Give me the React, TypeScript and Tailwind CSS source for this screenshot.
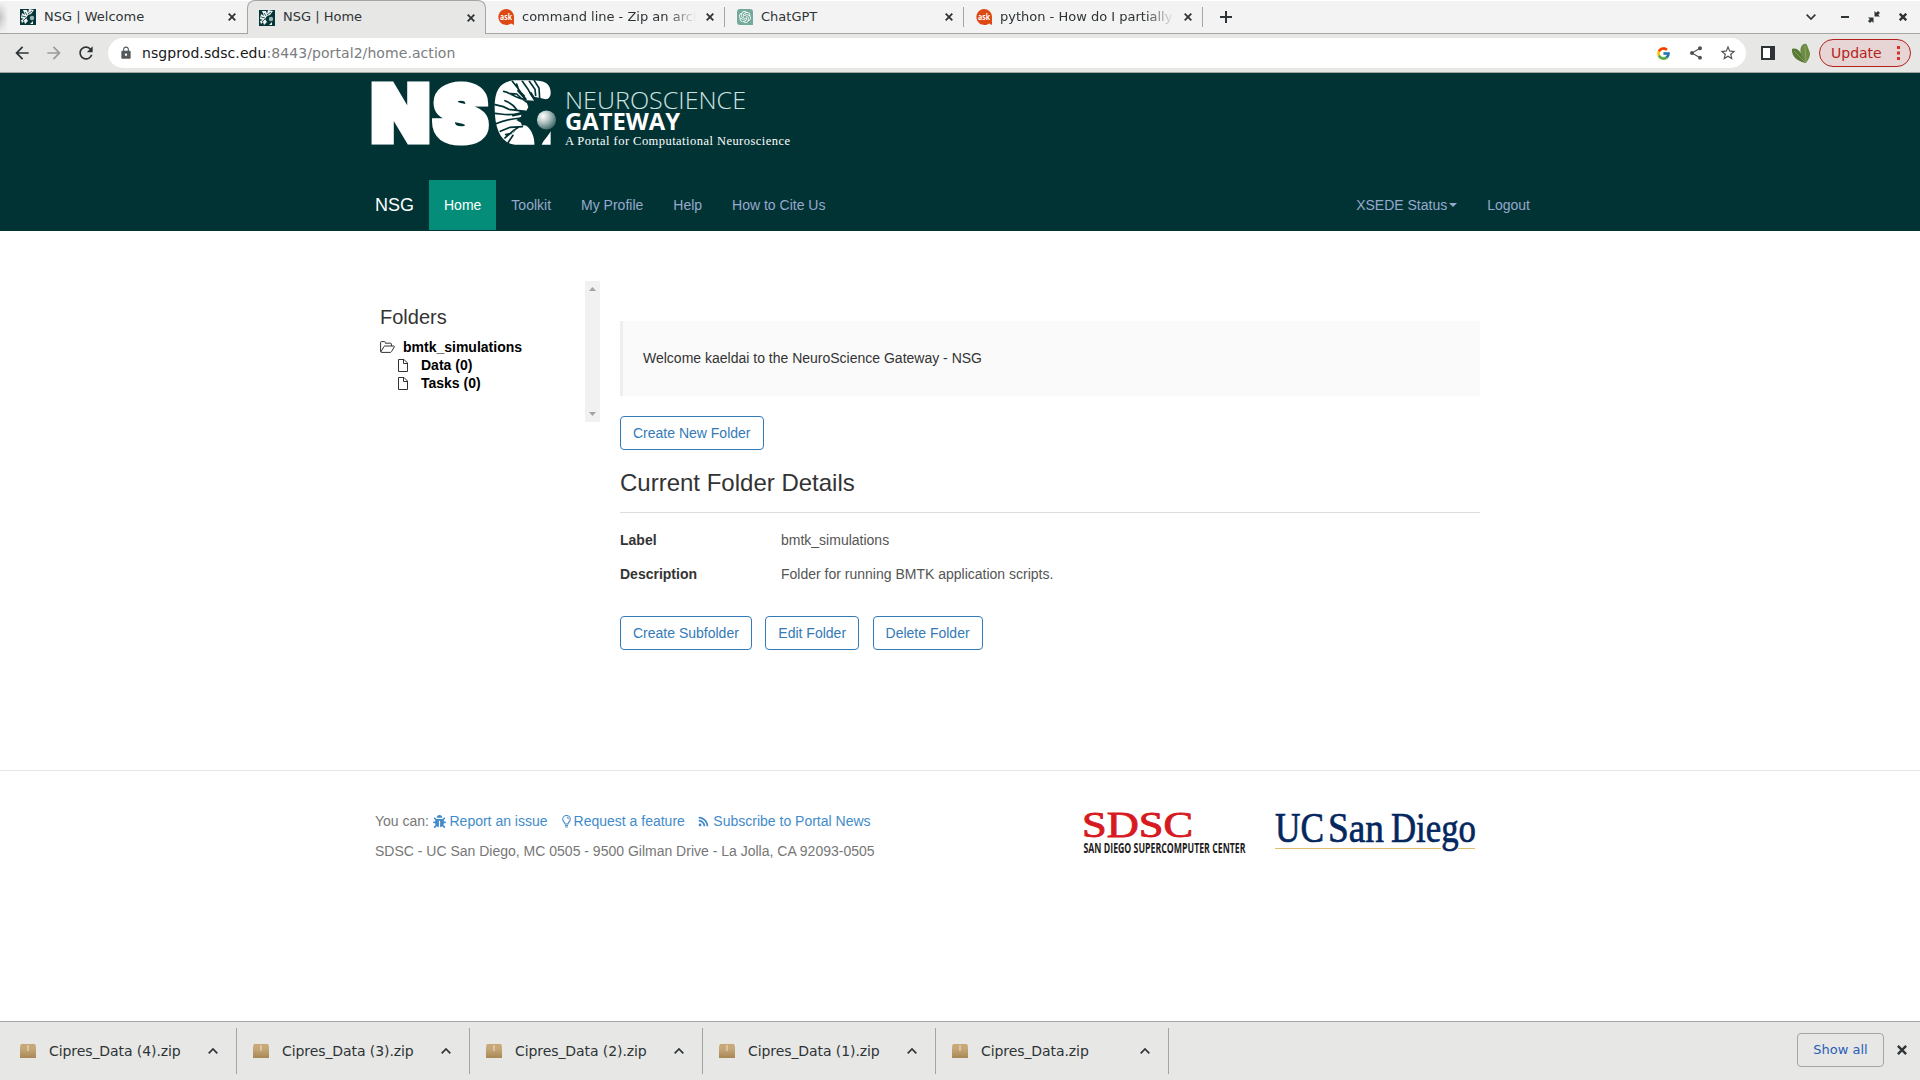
import React from 'react';
import { FaBug, FaRss } from 'react-icons/fa';
import { FcGoogle } from 'react-icons/fc';
import { MdShare, MdStarBorder, MdLock, MdArrowBack, MdArrowForward, MdRefresh } from 'react-icons/md';
import { SiOpenai } from 'react-icons/si';

const Cross = ({ size = 8, w = 1.8 }: { size?: number; w?: number }) => (
  <svg width={size} height={size} viewBox="0 0 8 8" className="shrink-0">
    <path d="M.7 .7L7.3 7.3M7.3 .7L.7 7.3" stroke="#2e3436" strokeWidth={w} fill="none" />
  </svg>
);

const NsgIcon = () => (
  <svg width="16" height="16" viewBox="0 0 16 16" className="shrink-0">
    <rect width="16" height="16" fill="#063638" />
    <path d="M1 9L2 4L5 6L3 1L7 1L8 4L9 0L14 1L11 5L8 6L6 9L8 12L5 15L4 12L2 14L1 11L4 10Z" fill="#eef4f3" />
    <path d="M12 2L8 5M5 3L7 6M2 7L6 8M3 12L6 9" stroke="#063638" strokeWidth=".8" />
    <circle cx="12" cy="9" r="2.2" fill="#9db5b5" />
    <path d="M10 15L13 12V15Z" fill="#eef4f3" />
  </svg>
);

const AskIcon = () => (
  <svg width="16" height="16" viewBox="0 0 16 16" className="shrink-0">
    <path d="M8 0a8 8 0 0 1 8 8v8l-3-1.5A8 8 0 1 1 8 0Z" fill="#dd4814" />
    <text x="8" y="10.8" fontSize="8" fontWeight="700" fontFamily="Open Sans, sans-serif" fill="#fff" textAnchor="middle" textLength="12" lengthAdjust="spacingAndGlyphs">ask</text>
  </svg>
);

const GptIcon = () => (
  <span className="flex size-4 shrink-0 items-center justify-center rounded-tl-[3px] rounded-tr-[3px] rounded-bl-[3px] bg-[#74aa9c] text-white">
    <SiOpenai size={12} />
  </span>
);

const tabs = [
  { title: 'NSG | Welcome', icon: <NsgIcon /> },
  { title: 'NSG | Home', icon: <NsgIcon />, active: true },
  { title: 'command line - Zip an arch', icon: <AskIcon />, fade: true },
  { title: 'ChatGPT', icon: <GptIcon /> },
  { title: 'python - How do I partially', icon: <AskIcon />, fade: true },
];

const TabStrip = () => (
  <div className="relative flex h-[34px] border-t border-white bg-[#f3f3f3] pl-2 shadow-[inset_0_-1px_0_#a5a5a3]">
    <span className="absolute top-0 left-0 h-[33px] w-2 bg-linear-to-r from-black/20 to-transparent [mask-image:linear-gradient(transparent,black,transparent)]" />
    {tabs.map((t, i) => (
      <div
        key={t.title}
        className={
          t.active
            ? 'relative -mt-px flex h-[34px] w-[239px] items-center rounded-t-lg border border-b-0 border-[#a5a5a3] bg-[#e7e7e5] pl-[11px]'
            : 'relative flex h-[32px] w-[239px] items-center pl-3'
        }
      >
        {t.icon}
        <span
          className={
            t.fade
              ? '-mt-px ml-2 w-[174px] overflow-hidden whitespace-nowrap [mask-image:linear-gradient(to_right,black_84%,transparent)]'
              : '-mt-px ml-2 w-[174px] overflow-hidden whitespace-nowrap'
          }
        >
          {t.title}
        </span>
        <span className="ml-[10px] flex"><Cross /></span>
        {i > 1 && <span className="absolute top-[6px] right-0 h-5 w-px bg-[#a5a5a3]" />}
      </div>
    ))}
    <svg width="12" height="12" viewBox="0 0 12 12" className="mt-[10px] ml-[17px]">
      <path d="M6 0V12M0 6H12" stroke="#2e3436" strokeWidth="2" />
    </svg>
    <div className="mr-[13px] ml-auto flex h-[31px] items-center">
      <svg width="10" height="6" viewBox="0 0 10 6"><path d="M.7 .7L5 5L9.300 .7" stroke="#2e3436" strokeWidth="1.7" fill="none" /></svg>
      <span className="ml-[25px] h-[2px] w-2 bg-[#2e3436]" />
      <svg width="12" height="12" viewBox="0 0 12 12" className="ml-[19px]">
        <path d="M6.500 0V5.500H12L10.200 3.800L12 2L10 0L8.200 1.800ZM5.500 12V6.500H0L1.800 8.200L0 10L2 12L3.800 10.200Z" fill="#2e3436" />
      </svg>
      <span className="ml-[19px] flex"><Cross w={2.4} /></span>
    </div>
  </div>
);

const Leaf = () => (
  <svg width="20" height="21" viewBox="0 0 20 21" className="ml-[16px]">
    <path d="M1 6C6 4 10 8 15 20C8 19 0 14 1 6Z" fill="#587a35" />
    <path d="M10 4C12 0 15 0 16 2L19 10C19 15 17 17 15 20C11 14 8 9 10 4Z" fill="#6d8c43" />
    <path d="M3 8L14 19M14 3L15 19" stroke="#a3b37c" strokeWidth=".6" />
  </svg>
);

const Toolbar = () => (
  <div className="flex h-[39px] items-center border-b border-[#a5a5a3] bg-[#e7e7e5] text-[#2e3436]">
    <MdArrowBack size={20} className="ml-[12px]" />
    <MdArrowForward size={20} className="ml-[12px] text-[#9a9c9c]" />
    <MdRefresh size={20} className="ml-[12px]" />
    <div className="ml-[12px] flex h-[30px] w-[1638px] items-center rounded-full bg-white">
      <MdLock size={14} className="ml-[11px] text-[#55595c]" />
      <span className="ml-[9px] w-[400px] text-[14px] tracking-[0.075px] text-[#7b7d7e]">
        <span className="text-[#17191a]">nsgprod.sdsc.edu</span>:8443/portal2/home.action
      </span>
      <FcGoogle size={15} className="ml-auto" />
      <MdShare size={16} className="ml-[17px] text-[#4f5356]" />
      <MdStarBorder size={18} className="mr-[9px] ml-[15px] text-[#4f5356]" />
    </div>
    <span className="ml-[15px] h-[14px] w-[14px] border-2 border-r-[5px] border-[#2e3436] bg-white" />
    <Leaf />
    <div className="ml-[8px] flex h-7 w-[92px] items-center rounded-full border border-[#b51f1c] bg-[#e6d5d4] pl-[11px] text-[14px] text-[#b51f1c]">
      Update
      <svg width="3" height="14" viewBox="0 0 3 14" className="ml-[15px] shrink-0"><path d="M0 0h3v3H0zM0 5.500h3v3H0zM0 11h3v3H0z" fill="#d9302c" /></svg>
    </div>
  </div>
);

const Logo = () => (
  <svg width="430" height="76" viewBox="360 74 430 76" className="-ml-[15px] block overflow-visible">
    <g fontFamily="Inter, sans-serif" fontWeight="900" fill="#fff" stroke="#fff" strokeWidth="7">
      <text x="371.500" y="141" fontSize="77.500" textLength="58" lengthAdjust="spacingAndGlyphs">N</text>
      <text x="433.500" y="140.500" fontSize="76" textLength="54" lengthAdjust="spacingAndGlyphs">S</text>
    </g>
    <g transform="translate(485 74) scale(.3333)">
      <path d="M197 58C198 30 180 19 140 19H95C48 19 29 45 29 100C29 170 50 208 90 212H148C150 190 135 155 118 154C105 154 95 166 82 180L88 170L112 160L108 146L94 138L108 128L110 118L100 110H124L130 100L126 88L112 78L150 80L146 68L166 72L182 76C192 76 197 66 197 58Z" fill="#fff" />
      <path d="M170 212C178 195 186 192 197 172V212Z" fill="#fff" />
      <g stroke="#023334" fill="none" strokeLinecap="round">
        <path d="M82 22L98 42L105 52M95 30L102 50L118 66M112 22L128 44L138 62L152 82M133 22L150 46L152 64M148 20L162 42L164 72M56 52C75 55 88 72 118 76M72 58L95 60L108 72M60 80C75 86 85 92 96 108M30 92L55 98L72 106L120 112M28 118C55 120 75 128 108 116M30 150C55 140 75 134 108 132M46 172L75 160L112 158M60 192L85 170L100 160M62 182L78 178M70 205L84 184" strokeWidth="5" />
        <path d="M100 50L122 76M138 58L154 84M84 124L112 118" strokeWidth="7" />
      </g>
    </g>
    <defs>
      <radialGradient id="ball" cx=".32" cy=".3" r=".8">
        <stop offset="0" stopColor="#fff" /><stop offset=".4" stopColor="#b9c9c8" /><stop offset="1" stopColor="#315b5c" />
      </radialGradient>
    </defs>
    <circle cx="546.500" cy="120" r="9.600" fill="url(#ball)" />
    <g fill="#fff">
      <text x="565" y="109" fontFamily="Open Sans, sans-serif" fontWeight="300" fontSize="24.500" fill="#cfe3e1" textLength="181" lengthAdjust="spacingAndGlyphs">NEUROSCIENCE</text>
      <text x="565" y="130" fontFamily="Open Sans, sans-serif" fontWeight="700" fontSize="24" textLength="115" lengthAdjust="spacingAndGlyphs">GATEWAY</text>
      <text x="565" y="145" fontFamily="Liberation Serif, serif" fontSize="12.500" textLength="225">A Portal for Computational Neuroscience</text>
    </g>
  </svg>
);

const Header = () => (
  <header className="h-[158px] bg-[#023334] font-['Liberation_Sans',Arial,sans-serif] text-[14px]">
    <div className="mx-auto w-[1170px] pt-px">
      <div className="h-[106px]"><Logo /></div>
      <nav className="flex h-[50px] items-stretch leading-[50px] text-[#96a9cd]">
        <span className="w-[54px] text-[18px] text-white">NSG</span>
        <span className="bg-[#048d79] px-[15px] text-white">Home</span>
        <span className="px-[15px]">Toolkit</span>
        <span className="px-[15px]">My Profile</span>
        <span className="px-[15px]">Help</span>
        <span className="px-[15px]">How to Cite Us</span>
        <span className="ml-auto flex items-center px-[15px]">
          XSEDE Status
          <span className="ml-[2px] border-x-4 border-t-4 border-x-transparent border-t-[#96a9cd]" />
        </span>
        <span className="pr-[15px] pl-[15px]">Logout</span>
      </nav>
    </div>
  </header>
);

const FileIcon = () => (
  <svg width="10" height="13" viewBox="0 0 10 13" className="mr-[13px] shrink-0">
    <path d="M.5 .5H6L9.500 4V12.500H.5ZM5.500 .5V4.500H9.500" fill="none" stroke="#333" strokeWidth="1" />
  </svg>
);

const Sidebar = () => (
  <aside className="mt-[50px] flex h-[141px] w-[220px] justify-between">
    <div className="pt-[25px] font-bold text-black">
      <h4 className="text-[20px] leading-[22px] font-normal text-[#333]">Folders</h4>
      <div className="mt-[10px] flex h-[18px] items-center">
        <svg width="15" height="12" viewBox="0 0 15 12" className="mr-2">
          <path d="M.6 10.500V1.500Q.6 .6 1.500 .6H4.500Q5.300 .6 5.300 1.500V2.200H10.500Q11.400 2.200 11.400 3V5M.8 11L4 5.500Q4.300 5 5 5H13.800Q14.700 5 14.200 5.900L11.600 10.500Q11.100 11.400 10.300 11.400H1.500Q.6 11.400 .6 10.500" fill="none" stroke="#333" strokeWidth="1" />
        </svg>
        bmtk_simulations
      </div>
      <div className="flex h-[18px] items-center pl-[18px]"><FileIcon />Data (0)</div>
      <div className="flex h-[18px] items-center pl-[18px]"><FileIcon />Tasks (0)</div>
    </div>
    <div className="flex w-[15px] flex-col items-center justify-between bg-[#f1f1f1] py-[6px]">
      <svg width="7" height="4" viewBox="0 0 7 4"><path d="M0 4L3.500 0L7 4Z" fill="#a3a3a3" /></svg>
      <svg width="7" height="4" viewBox="0 0 7 4"><path d="M0 0L3.500 4L7 0Z" fill="#a3a3a3" /></svg>
    </div>
  </aside>
);

const Btn = ({ children }: { children: React.ReactNode }) => (
  <button className="h-[34px] rounded-[4px] border border-[#337ab7] bg-white px-3 text-[#337ab7]">{children}</button>
);

const Main = () => (
  <main className="ml-5 w-[860px] pt-[90px]">
    <div className="flex h-[75px] items-center border-l-[3px] border-[#eee] bg-[#fafafa] pl-5 text-[#333]">
      Welcome kaeldai to the NeuroScience Gateway - NSG
    </div>
    <div className="mt-5 flex"><Btn>Create New Folder</Btn></div>
    <h3 className="mt-5 text-[24px] leading-[26px] text-[#333]">Current Folder Details</h3>
    <hr className="mt-4 border-[#ddd]" />
    <dl className="mt-[17px] grid grid-cols-[161px_1fr] gap-y-[14px] leading-5 text-[#555]">
      <dt className="font-bold text-[#333]">Label</dt><dd>bmtk_simulations</dd>
      <dt className="font-bold text-[#333]">Description</dt><dd>Folder for running BMTK application scripts.</dd>
    </dl>
    <div className="mt-8 flex gap-[13.5px]">
      <Btn>Create Subfolder</Btn><Btn>Edit Folder</Btn><Btn>Delete Folder</Btn>
    </div>
  </main>
);

const Bulb = () => (
  <svg width="9" height="13" viewBox="0 0 9 13" className="mr-[3px]">
    <path d="M3 9C3 7 .7 6.500 .7 4.200A3.800 3.700 0 0 1 8.300 4.200C8.300 6.500 6 7 6 9ZM3 10.500H6M3.200 12H5.800M4.800 2.300Q6.300 2.500 6.400 4" fill="none" stroke="#428bca" strokeWidth="1.1" />
  </svg>
);

const Footer = () => (
  <footer className="border-t border-[#e5e5e5]">
    <div className="mx-auto flex w-[1170px] pt-10 text-[#777]">
      <div className="w-[708px]">
        <div className="flex h-5 items-center text-[#428bca]">
          <span className="mr-[4px] text-[#777]">You can:</span>
          <FaBug size={13} className="mr-[3.5px]" />Report an issue
          <span className="ml-[14px] flex items-center"><Bulb />Request a feature</span>
          <span className="ml-[13.5px] flex items-center"><FaRss size={11} className="mr-1" />Subscribe to Portal News</span>
        </div>
        <div className="mt-[10px] leading-5">SDSC - UC San Diego, MC 0505 - 9500 Gilman Drive - La Jolla, CA 92093-0505</div>
      </div>
      <svg width="164" height="44" viewBox="1083 812 164 44" className="overflow-visible">
        <text x="1082" y="838" fontFamily="Liberation Serif, serif" fontSize="36" fill="#d71a21" stroke="#d71a21" strokeWidth=".9" textLength="111" lengthAdjust="spacingAndGlyphs">SDSC</text>
        <text x="1083.500" y="853.500" fontFamily="Open Sans, sans-serif" fontWeight="700" fontSize="14.500" fill="#1f1d1e" textLength="162" lengthAdjust="spacingAndGlyphs">SAN DIEGO SUPERCOMPUTER CENTER</text>
      </svg>
      <svg width="204" height="44" viewBox="1273 812 204 44" className="ml-[26px] overflow-visible">
        <path d="M1275 849.500H1441M1458 849.500H1475" stroke="#e0bd6c" strokeWidth="1.200" />
        <g fontFamily="Liberation Serif, serif" fontSize="42.500" fill="#04275f" stroke="#04275f" strokeWidth=".7">
          <text x="1275" y="842.500" textLength="49" lengthAdjust="spacingAndGlyphs">UC</text>
          <text x="1328" y="842.500" textLength="56" lengthAdjust="spacingAndGlyphs">San</text>
          <text x="1391" y="842.500" textLength="85" lengthAdjust="spacingAndGlyphs">Diego</text>
        </g>
      </svg>
    </div>
  </footer>
);

const BoxIcon = () => (
  <svg width="16" height="14" viewBox="0 0 16 14">
    <defs>
      <linearGradient id="box" x2="0" y2="1"><stop stopColor="#d3b88b" /><stop offset="1" stopColor="#a98754" /></linearGradient>
    </defs>
    <path d="M1 0H15L16 4V14H0V4Z" fill="url(#box)" />
    <path d="M1 0H15L16 4H0Z" fill="#c8a878" />
    <path d="M7.500 1H8.500V7H7.500Z" fill="#f0e2c8" />
  </svg>
);

const downloads = ['Cipres_Data (4).zip', 'Cipres_Data (3).zip', 'Cipres_Data (2).zip', 'Cipres_Data (1).zip', 'Cipres_Data.zip'];

const DownloadBar = () => (
  <div className="flex h-[59px] border-t border-[#a5a5a3] bg-[#e7e7e5] pl-1 text-[#2e3436]">
    {downloads.map((d) => (
      <div key={d} className="mt-[6px] flex h-[46px] w-[233px] items-center border-r border-[#a5a5a3] pl-4">
        <BoxIcon />
        <span className="mt-px ml-[13px] text-[14px] tracking-[-0.08px]">{d}</span>
        <svg width="10" height="6" viewBox="0 0 10 6" className="mr-[18px] ml-auto"><path d="M.7 5.300L5 1L9.300 5.300" stroke="#2e3436" strokeWidth="1.700" fill="none" /></svg>
      </div>
    ))}
    <div className="mt-[11px] ml-auto flex h-[34px] w-[87px] items-center justify-center rounded-[4px] border border-[#a5a5a3] text-[#2a5db8]">Show all</div>
    <span className="mt-[23px] mr-[13px] ml-[13px]"><Cross size={10} w={1.9} /></span>
  </div>
);

export default function App() {
  return (
    <div className="flex h-[1080px] w-[1920px] flex-col overflow-hidden bg-white font-['DejaVu_Sans',sans-serif] text-[13px] text-[#2e3436]">
      <TabStrip />
      <Toolbar />
      <Header />
      <div className="flex-1 font-['Liberation_Sans',Arial,sans-serif] text-[14px]">
        <div className="mx-auto flex h-[539px] w-[1160px]"><Sidebar /><Main /></div>
        <Footer />
      </div>
      <DownloadBar />
    </div>
  );
}
